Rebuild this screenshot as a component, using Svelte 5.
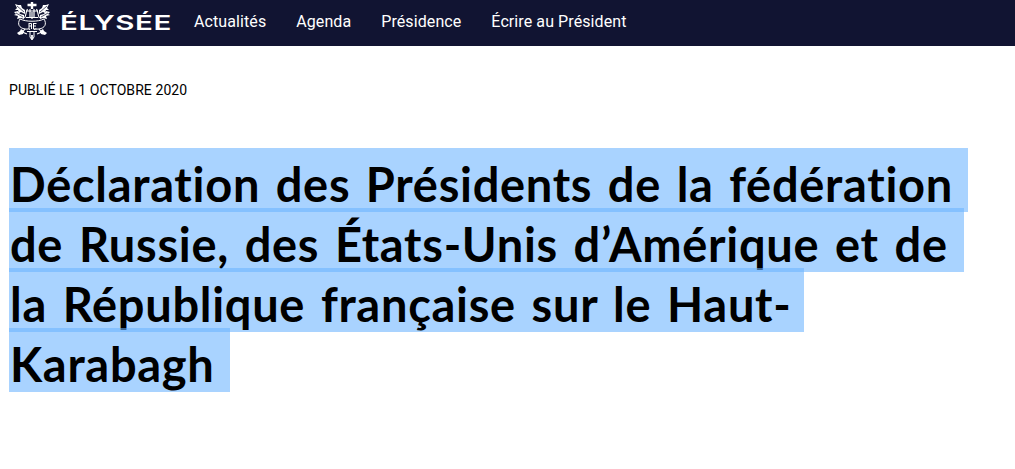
<script lang="ts">
	const links = ['Actualités', 'Agenda', 'Présidence', 'Écrire au Président'];

	// one entry per selected line: width of the highlight and gap between words
	const lines = [
		{ text: 'Déclaration des Présidents de la fédération', width: 959, gap: 3.5 },
		{ text: 'de Russie, des États-Unis d’Amérique et de', width: 955, gap: 3.6 },
		{ text: 'la République française sur le Haut-', width: 795, gap: 3.6 },
		{ text: 'Karabagh', width: 221, gap: 0 }
	];
</script>

<header>
	<a class="brand" href="/" aria-label="Élysée">
		<svg class="emblem" viewBox="0 0 38 42" width="38" height="42">
			<g fill="none" stroke="#fff">
				<path stroke-width="2.400" d="M19 2v7M14.500 5h9" />
				<path stroke-width="1.200" d="M14.500 9c-2 3-1 6-3 9M23.500 9c2 3 1 6 3 9M17 9v9M21 9v9M19 12v7M13 11h12M13 17.500h12" />
				<path stroke-width="1" d="M7 19c-3 5-1 9 5 10 3 .5 4-1 5 1M31 19c3 5 1 9-5 10-3 .5-4-1-5 1M7 19c6 3 18 3 24 0" />
				<path stroke-width="1" d="M16 23v6M16 23.500h2.500v2.500H16M18.500 26v3M20.500 23v6M20.500 23.500h3M20.500 26h2.500M20.500 29h3" />
				<path stroke-width="1.200" d="M8 31.500l6 2.500M30 31.500l-6 2.500M12 29l-4 5M26 29l4 5M14 31.500h10" />
				<path stroke-width="1" d="M17 31v6l2 3 2-3v-6" />
				<path stroke-width="1.800" d="M19 35v4" />
			</g>
			<g fill="#fff">
				<path d="M2 4l3 1 3 0 1 3 3 2 0 4-4-2-2 1-1-3-3 0 2-2z" />
				<path d="M1 12l4-1 2 3 4 1 0 4-3-1-4 1 1-3-4-1 2-1z" />
				<path d="M36 4l-3 1-3 0-1 3-3 2 0 4 4-2 2 1 1-3 3 0-2-2z" />
				<path d="M37 12l-4-1-2 3-4 1 0 4 3-1 4 1-1-3 4-1-2-1z" />
				<path d="M4 33l3-2 1-2 3 2-1 3-4 1zM34 33l-3-2-1-2-3 2 1 3 4 1z" />
			</g>
			<g fill="none" stroke="#111432" stroke-width=".7">
				<path d="M4 6l7 6M3 13l7 4M34 6l-7 6M35 13l-7 4" />
			</g>
		</svg>
		<svg class="wordmark" viewBox="0 0 112 28" width="112" height="28">
			<text x="-1" y="23" textLength="112" lengthAdjust="spacingAndGlyphs">ÉLYSÉE</text>
		</svg>
	</a>

	<nav>
		{#each links as link}
			<a href="/">{link}</a>
		{/each}
	</nav>
</header>

<main>
	<p class="date">Publié le 1 octobre 2020</p>

	<h1>
		{#each lines as line}
			<span class="line" style="width: {line.width}px; word-spacing: {line.gap}px">{line.text}</span>
		{/each}
	</h1>
</main>

<style>
	:global(body) {
		background-color: white;
		font-family: Roboto, sans-serif;
	}

	header {
		display: flex;
		align-items: center;
		height: 46px;
		padding-left: 13px;
		box-sizing: border-box;
		background-color: #111432;
	}

	.brand {
		display: flex;
		align-items: center;
		height: 42px;
		margin-bottom: 4px;
		gap: 10px;
	}

	.wordmark text {
		font-family: Inter, sans-serif;
		font-size: 19.5px;
		font-weight: 600;
		letter-spacing: 0.4px;
		fill: white;
	}

	nav {
		display: flex;
		gap: 30px;
		margin: 0 0 2px 21px;
	}

	nav a {
		color: white;
		font-size: 16px;
		line-height: 20px;
		letter-spacing: 0.09px;
		text-decoration: none;
	}

	main {
		padding: 34px 9px 0;
	}

	.date {
		margin: 0;
		font-size: 14px;
		line-height: 20px;
		letter-spacing: 0.08px;
		text-transform: uppercase;
	}

	h1 {
		display: flex;
		flex-direction: column;
		margin: 48px 0 0;
		font-family: Lato, sans-serif;
		font-size: 47px;
		font-weight: 700;
		letter-spacing: 0.7px;
	}

	.line {
		height: 64px;
		padding-left: 1px;
		box-sizing: border-box;
		line-height: 72px;
		white-space: nowrap;
		background-color: rgba(107, 180, 255, 0.586);
	}

	.line + .line {
		margin-top: -4px;
	}
</style>
